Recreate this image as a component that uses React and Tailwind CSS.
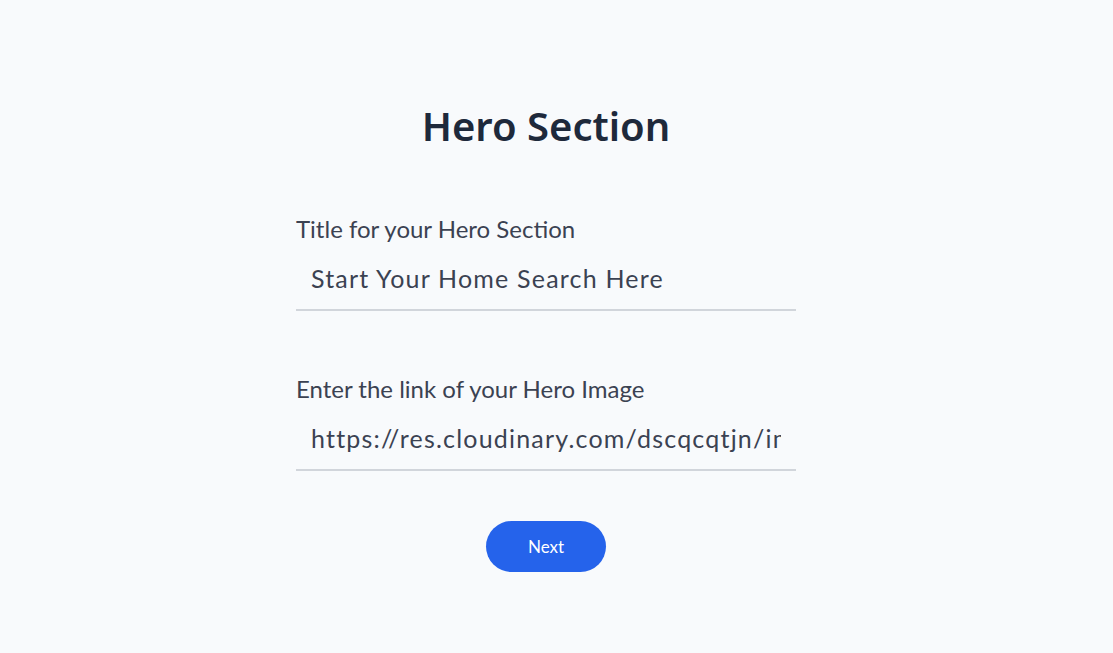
import React, { useState } from "react";

const HeroSectionForm = () => {
  const [title, setTitle] = useState("Start Your Home Search Here");
  const [imageLink, setImageLink] = useState(
    "https://res.cloudinary.com/dscqcqtjn/image/upload/v1690000000/hero.jpg"
  );

  return (
    <div className="min-h-screen w-full bg-[#f8fafc] flex flex-col items-center pt-[98px] pr-[21px] font-['Lato',sans-serif]">
      <h1 className="text-[40px] leading-[56px] font-semibold text-[#1e293b] font-['Noto_Sans',sans-serif]">
        Hero Section
      </h1>
      <form className="w-[500px] mt-[59px] flex flex-col" onSubmit={(e) => e.preventDefault()}>
        <label className="text-2xl leading-8 text-[#3b4252]">Title for your Hero Section</label>
        <input
          className="w-full px-[15px] pt-[17px] pb-[15px] text-[25px] leading-8 tracking-[1.2px] text-[#3b4252] bg-transparent border-b-2 border-[#d1d5db] outline-none"
          value={title}
          onChange={(e) => setTitle(e.target.value)}
        />
        <label className="mt-[62px] text-2xl leading-8 text-[#3b4252]">
          Enter the link of your Hero Image
        </label>
        <input
          className="w-full px-[15px] pt-[17px] pb-[15px] text-[25px] leading-8 tracking-[1.2px] text-[#3b4252] bg-transparent border-b-2 border-[#d1d5db] outline-none"
          value={imageLink}
          onChange={(e) => setImageLink(e.target.value)}
        />
        <button
          type="submit"
          className="self-center mt-[50px] w-[120px] h-[51px] rounded-full bg-[#2563eb] text-white text-[17px]"
        >
          Next
        </button>
      </form>
    </div>
  );
};

export default function App() {
  return <HeroSectionForm />;
}
